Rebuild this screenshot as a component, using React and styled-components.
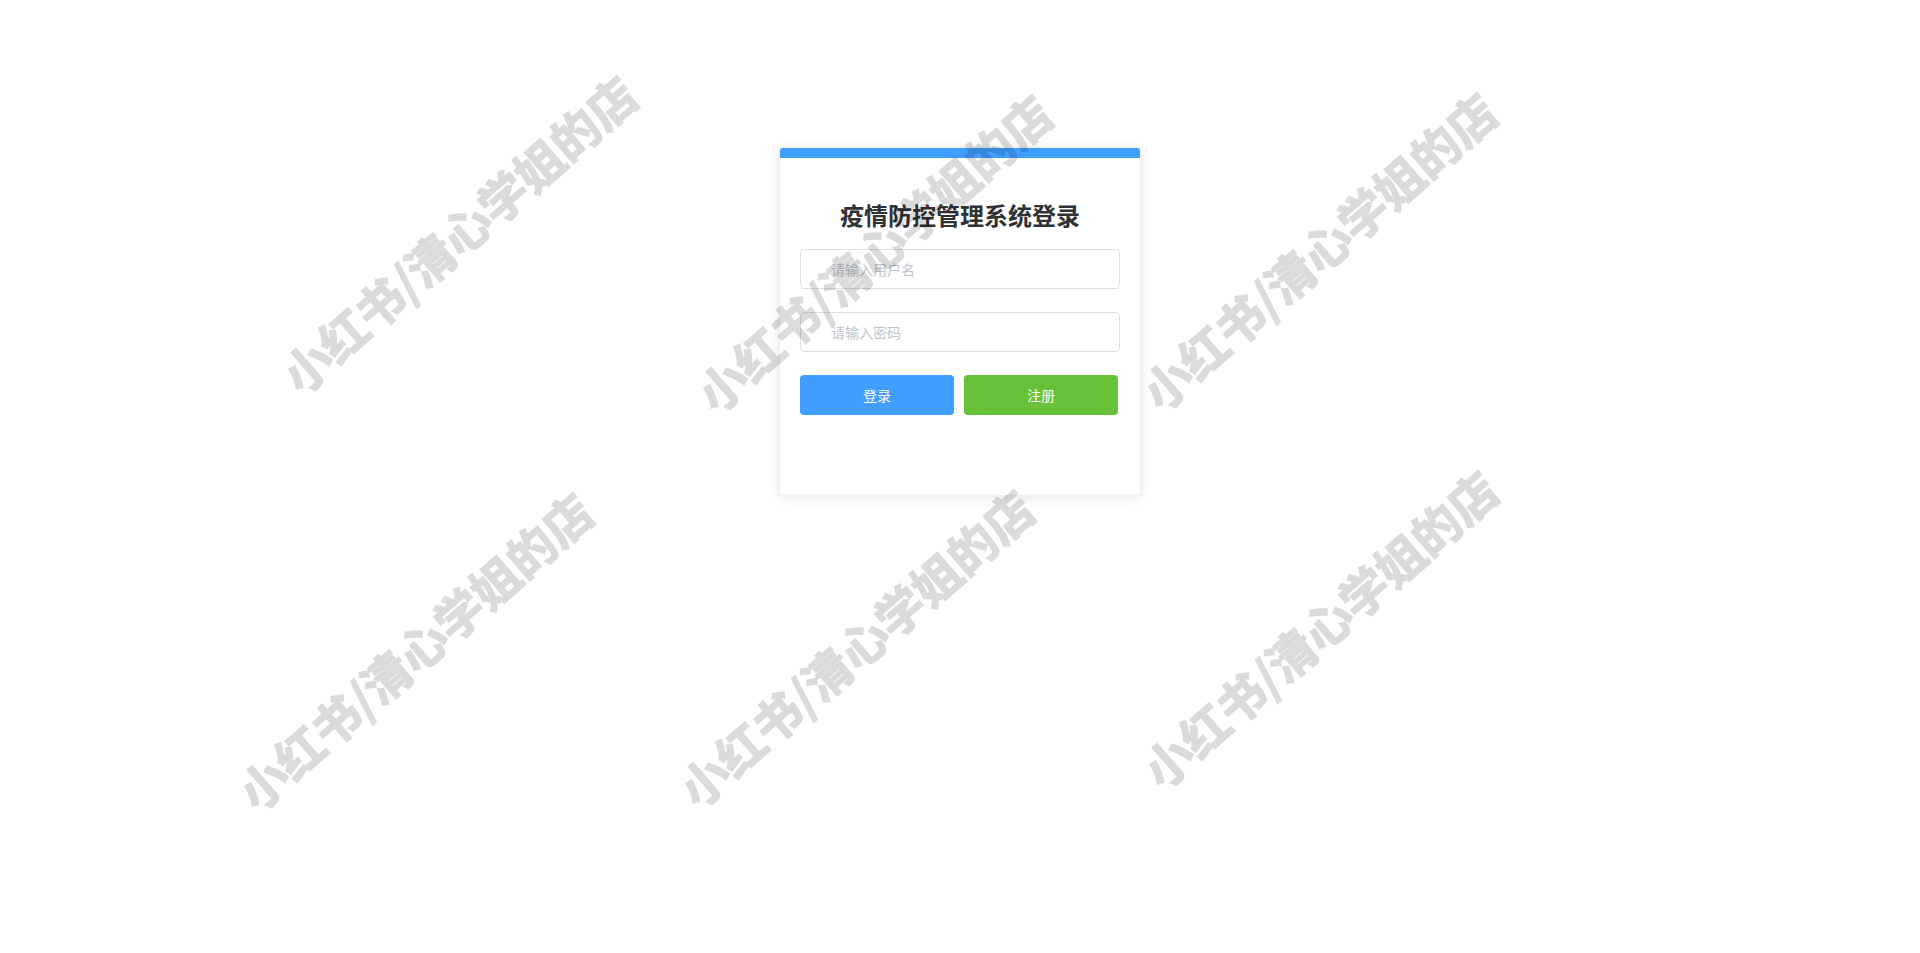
import React from "react";
import styled, { createGlobalStyle } from "styled-components";

const GlobalStyle = createGlobalStyle`
  html, body {
    margin: 0;
    padding: 0;
    background: #ffffff;
    font-family: "Helvetica Neue", Helvetica, "Liberation Sans", "Noto Sans CJK SC", sans-serif;
  }
  * { box-sizing: border-box; }
`;

const Page = styled.div`
  min-height: 953px;
  display: flex;
  flex-direction: column;
  align-items: center;
  padding-top: 147px;
`;

const Card = styled.div`
  width: 362px;
  height: 349px;
  background: #fff;
  border: 1px solid #ebeef5;
  border-radius: 4px;
  box-shadow: 0 2px 12px 0 rgba(0, 0, 0, 0.1);
  overflow: hidden;
  display: flex;
  flex-direction: column;
`;

const TopBar = styled.div`
  height: 10px;
  background: #409eff;
  flex: none;
`;

const Body = styled.div`
  padding: 45px 20px 0;
  display: flex;
  flex-direction: column;
`;

const Title = styled.h2`
  margin: 0 0 22px;
  font-size: 24px;
  line-height: 24px;
  font-weight: 700;
  text-align: center;
  color: #303133;
  font-family: "Noto Sans CJK SC", sans-serif;
`;

const Field = styled.input`
  width: 100%;
  height: 40px;
  margin: 0 0 23px;
  padding: 0 15px 0 30px;
  border: 1px solid #dcdfe6;
  border-radius: 4px;
  background: #fff;
  font-size: 14px;
  color: #606266;
  font-family: "Noto Sans CJK SC", sans-serif;
  outline: none;
  &::placeholder {
    color: #c0c4cc;
  }
`;

const ButtonRow = styled.div`
  display: flex;
  gap: 10px;
`;

const Button = styled.button`
  width: 154px;
  height: 40px;
  border: none;
  border-radius: 4px;
  background: ${(p) => p.$bg};
  color: #fff;
  font-size: 14px;
  font-family: "Noto Sans CJK SC", sans-serif;
  cursor: pointer;
  padding: 0;
`;

const WatermarkLayer = styled.div`
  position: fixed;
  inset: 0;
  pointer-events: none;
  overflow: hidden;
  z-index: 10;
`;

const Mark = styled.div`
  position: absolute;
  transform: translate(-50%, -50%) rotate(-41deg);
  white-space: nowrap;
  font-size: 48px;
  line-height: 1;
  font-weight: 700;
  color: #000;
  -webkit-text-stroke: 1.6px #000;
  opacity: 0.14;
  font-family: "Noto Sans CJK SC", sans-serif;
  user-select: none;
`;

const marks = [
  [458, 233],
  [873, 252],
  [1318, 250],
  [414, 650],
  [855, 647],
  [1319, 628],
];

export default function App() {
  return (
    <>
      <GlobalStyle />
      <Page>
        <Card>
          <TopBar />
          <Body>
            <Title>疫情防控管理系统登录</Title>
            <Field type="text" placeholder="请输入用户名" />
            <Field type="password" placeholder="请输入密码" />
            <ButtonRow>
              <Button $bg="#409eff">登录</Button>
              <Button $bg="#67c23a">注册</Button>
            </ButtonRow>
          </Body>
        </Card>
      </Page>
      <WatermarkLayer>
        {marks.map(([x, y], i) => (
          <Mark key={i} style={{ left: x, top: y }}>
            小红书/清心学姐的店
          </Mark>
        ))}
      </WatermarkLayer>
    </>
  );
}
